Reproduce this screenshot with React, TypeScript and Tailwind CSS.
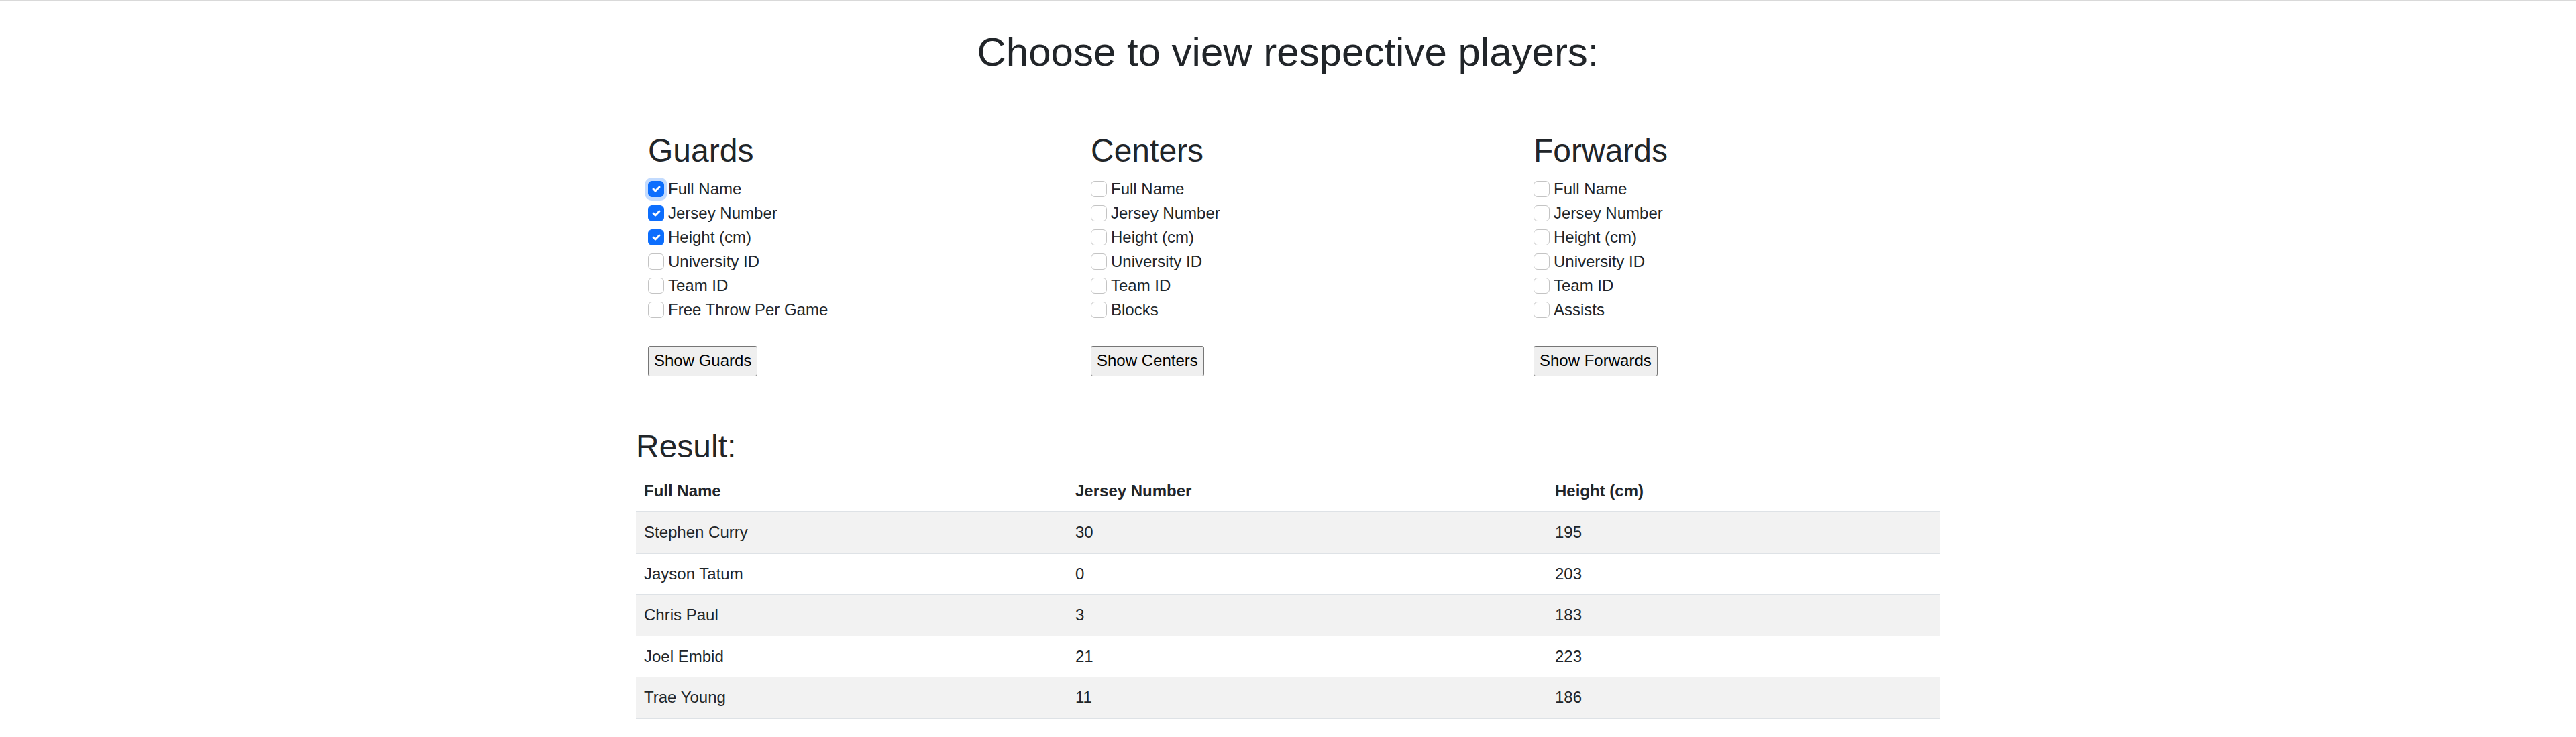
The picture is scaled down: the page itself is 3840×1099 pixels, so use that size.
import { useState } from 'react';

type Group = {
  title: string;
  button: string;
  fields: string[];
};

const groups: Group[] = [
  {
    title: 'Guards',
    button: 'Show Guards',
    fields: ['Full Name', 'Jersey Number', 'Height (cm)', 'University ID', 'Team ID', 'Free Throw Per Game'],
  },
  {
    title: 'Centers',
    button: 'Show Centers',
    fields: ['Full Name', 'Jersey Number', 'Height (cm)', 'University ID', 'Team ID', 'Blocks'],
  },
  {
    title: 'Forwards',
    button: 'Show Forwards',
    fields: ['Full Name', 'Jersey Number', 'Height (cm)', 'University ID', 'Team ID', 'Assists'],
  },
];

const players = [
  { name: 'Stephen Curry', jersey: 30, height: 195 },
  { name: 'Jayson Tatum', jersey: 0, height: 203 },
  { name: 'Chris Paul', jersey: 3, height: 183 },
  { name: 'Joel Embid', jersey: 21, height: 223 },
  { name: 'Trae Young', jersey: 11, height: 186 },
];

const Checkbox = ({ checked, focused }: { checked: boolean; focused?: boolean }) => (
  <span
    className={`flex h-[24px] w-[24px] shrink-0 items-center justify-center rounded-[6px] border ${
      checked ? 'border-[#0d6efd] bg-[#0d6efd]' : 'border-[#c4c4c4] bg-white'
    } ${focused ? 'ring-[5px] ring-[#c3dbfe]' : ''}`}
  >
    {checked && (
      <svg viewBox="0 0 20 20" className="h-[20px] w-[20px]">
        <path d="M6 10l3 3l6-6" fill="none" stroke="white" strokeWidth="3" strokeLinecap="round" strokeLinejoin="round" />
      </svg>
    )}
  </span>
);

const GroupColumn = ({ group, initial }: { group: Group; initial: boolean[] }) => {
  const [checked, setChecked] = useState(initial);

  return (
    <div className="pl-[36px]">
      <h2 className="mb-[10px] text-[48px] font-medium leading-[57.6px]">{group.title}</h2>
      <div>
        {group.fields.map((field, i) => (
          <label
            key={field}
            className="flex h-[36px] cursor-pointer items-center text-[24px] leading-[36px]"
            onClick={() => setChecked(checked.map((c, j) => (j === i ? !c : c)))}
          >
            <Checkbox checked={checked[i]} focused={group.title === 'Guards' && i === 0} />
            <span className="ml-[6px]">{field}</span>
          </label>
        ))}
      </div>
      <button className="mt-[36px] h-[45px] rounded-[3px] border border-[#767676] bg-[#efefef] px-[8px] text-[24px] leading-[36px] text-black">
        {group.button}
      </button>
    </div>
  );
};

export default function App() {
  return (
    <div className="min-h-screen border-t-2 border-[#d9d9d9] bg-white font-['Liberation_Sans',Arial,sans-serif] text-[#212529]">
      <h1 className="mt-[40px] text-center text-[60px] font-medium leading-[72px]">
        Choose to view respective players:
      </h1>

      <div className="mx-auto w-[1980px] px-[18px]">
        <div className="mx-[-18px] mt-[82px] grid grid-cols-3">
          {groups.map((g, idx) => (
            <GroupColumn key={g.title} group={g} initial={idx === 0 ? [true, true, true, false, false, false] : [false, false, false, false, false, false]} />
          ))}
        </div>

        <h2 className="mt-[76px] mb-[8px] text-[48px] font-medium leading-[57.6px]">Result:</h2>

        <table className="w-full table-fixed border-collapse text-left text-[24px]">
          <thead>
            <tr className="border-b-2 border-[#dee2e6]">
              <th className="w-[643px] px-[12px] py-[12px] font-bold leading-[36px]">Full Name</th>
              <th className="w-[715px] px-[12px] py-[12px] font-bold leading-[36px]">Jersey Number</th>
              <th className="px-[12px] py-[12px] font-bold leading-[36px]">Height (cm)</th>
            </tr>
          </thead>
          <tbody>
            {players.map((p, i) => (
              <tr key={p.name} className={`border-b border-[#dee2e6] ${i % 2 === 0 ? 'bg-[#f2f2f2]' : 'bg-white'}`}>
                <td className="px-[12px] py-[12px] leading-[36.5px]">{p.name}</td>
                <td className="px-[12px] py-[12px] leading-[36.5px]">{p.jersey}</td>
                <td className="px-[12px] py-[12px] leading-[36.5px]">{p.height}</td>
              </tr>
            ))}
          </tbody>
        </table>
      </div>
    </div>
  );
}
